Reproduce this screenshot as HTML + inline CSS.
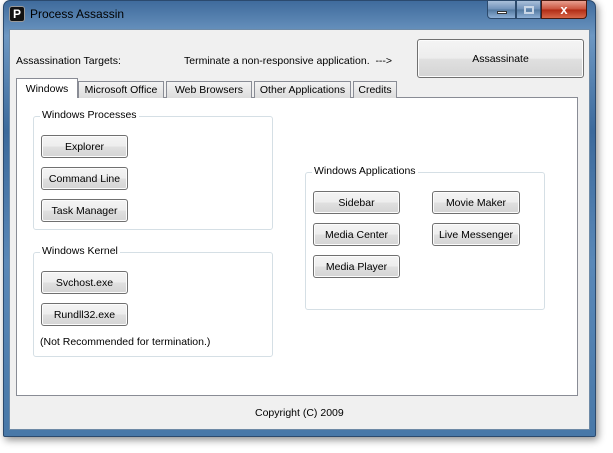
<!DOCTYPE html>
<html><head><style>
*{box-sizing:border-box;margin:0;padding:0}
body{width:613px;height:453px;background:#fff;position:relative;overflow:hidden;font-family:"Liberation Sans",sans-serif;font-size:10.5px;color:#000}
.abs{position:absolute}
.frame{left:3px;top:0;width:593px;height:437px;border:1px solid #2b4a6e;border-radius:7px 7px 2px 2px;background:linear-gradient(180deg,#3f6b9c 0,#6d97c2 8%,#3c6a9c 30%,#5a88b8 60%,#4878a8 100%);box-shadow:2px 3px 8px rgba(0,0,0,.45)}
.client{left:9px;top:29px;width:581px;height:401px;background:#f0f0f0;border:1px solid #6e8aa6}
.btn{position:absolute;border:1px solid #707070;border-radius:3px;background:linear-gradient(#f4f4f4 0,#ededed 50%,#e0e0e0 51%,#d4d4d4 100%);text-align:center;font-size:10.5px;box-shadow:inset 0 0 0 1px #fcfcfc}
.grp{position:absolute;border:1px solid #d5dfe5;border-radius:3px}
.grp span{position:absolute;top:-8px;left:6px;background:#fff;padding:0 2px;font-size:10.5px}
.tab{position:absolute;top:81px;height:17px;border:1px solid #898c95;border-bottom:none;background:linear-gradient(#f3f3f3,#dcdcdc);font-size:10.5px;text-align:center;line-height:17px}
</style></head><body>
<div class="abs frame"></div>
<div class="abs" style="left:9px;top:6px;width:16px;height:16px;border-radius:3px;background:#111;border:1px solid #999;color:#fff;font-size:12px;font-weight:bold;line-height:14px;text-align:center">P</div>
<div class="abs" style="left:30px;top:7px;font-size:12px;color:#000">Process Assassin</div>
<div class="abs" style="left:487px;top:0;width:29px;height:19px;border:1px solid #2c4a6c;border-radius:0 0 0 4px;background:linear-gradient(#a9c0da,#6e90b8 50%,#52789f 51%,#8eb0d6)"><div class="abs" style="left:9px;top:10px;width:10px;height:3px;background:#fff;border:1px solid #333"></div></div>
<div class="abs" style="left:516px;top:0;width:25px;height:19px;border:1px solid #2c4a6c;background:linear-gradient(#a9c0da,#6e90b8 50%,#52789f 51%,#8eb0d6)"><div class="abs" style="left:7px;top:5px;width:10px;height:8px;border:2px solid #c8d6e6"></div></div>
<div class="abs" style="left:541px;top:0;width:46px;height:19px;border:1px solid #4a1a10;border-radius:0 0 4px 0;background:linear-gradient(#e8a090,#c8503a 50%,#b02a14 51%,#d8684a);color:#fff;font-weight:bold;font-size:13px;text-align:center;line-height:17px">x</div>
<div class="abs client"></div>
<div class="abs" style="left:16px;top:55px">Assassination Targets:</div>
<div class="abs" style="left:184px;top:55px">Terminate a non-responsive application.&nbsp; ---&gt;</div>
<div class="btn" style="left:417px;top:39px;width:167px;height:39px;line-height:38px">Assassinate</div>
<div class="abs" style="left:16px;top:97px;width:562px;height:299px;background:#fff;border:1px solid #898c95"></div>
<div class="tab" style="left:78px;width:86px">Microsoft Office</div>
<div class="tab" style="left:166px;width:86px">Web Browsers</div>
<div class="tab" style="left:254px;width:97px">Other Applications</div>
<div class="tab" style="left:353px;width:44px">Credits</div>
<div class="tab" style="left:16px;top:78px;height:20px;width:62px;background:#fff;line-height:20px">Windows</div>
<div class="grp" style="left:33px;top:116px;width:240px;height:114px"><span>Windows Processes</span></div>
<div class="btn" style="left:41px;top:135px;width:87px;height:23px;line-height:22px">Explorer</div>
<div class="btn" style="left:41px;top:167px;width:87px;height:23px;line-height:22px">Command Line</div>
<div class="btn" style="left:41px;top:199px;width:87px;height:23px;line-height:22px">Task Manager</div>
<div class="grp" style="left:33px;top:252px;width:240px;height:105px"><span>Windows Kernel</span></div>
<div class="btn" style="left:41px;top:271px;width:87px;height:23px;line-height:22px">Svchost.exe</div>
<div class="btn" style="left:41px;top:303px;width:87px;height:23px;line-height:22px">Rundll32.exe</div>
<div class="abs" style="left:40px;top:336px">(Not Recommended for termination.)</div>
<div class="grp" style="left:305px;top:172px;width:240px;height:138px"><span>Windows Applications</span></div>
<div class="btn" style="left:313px;top:191px;width:87px;height:23px;line-height:22px">Sidebar</div>
<div class="btn" style="left:313px;top:223px;width:87px;height:23px;line-height:22px">Media Center</div>
<div class="btn" style="left:313px;top:255px;width:87px;height:23px;line-height:22px">Media Player</div>
<div class="btn" style="left:432px;top:191px;width:88px;height:23px;line-height:22px">Movie Maker</div>
<div class="btn" style="left:432px;top:223px;width:88px;height:23px;line-height:22px">Live Messenger</div>
<div class="abs" style="left:255px;top:407px">Copyright (C) 2009</div>
</body></html>
